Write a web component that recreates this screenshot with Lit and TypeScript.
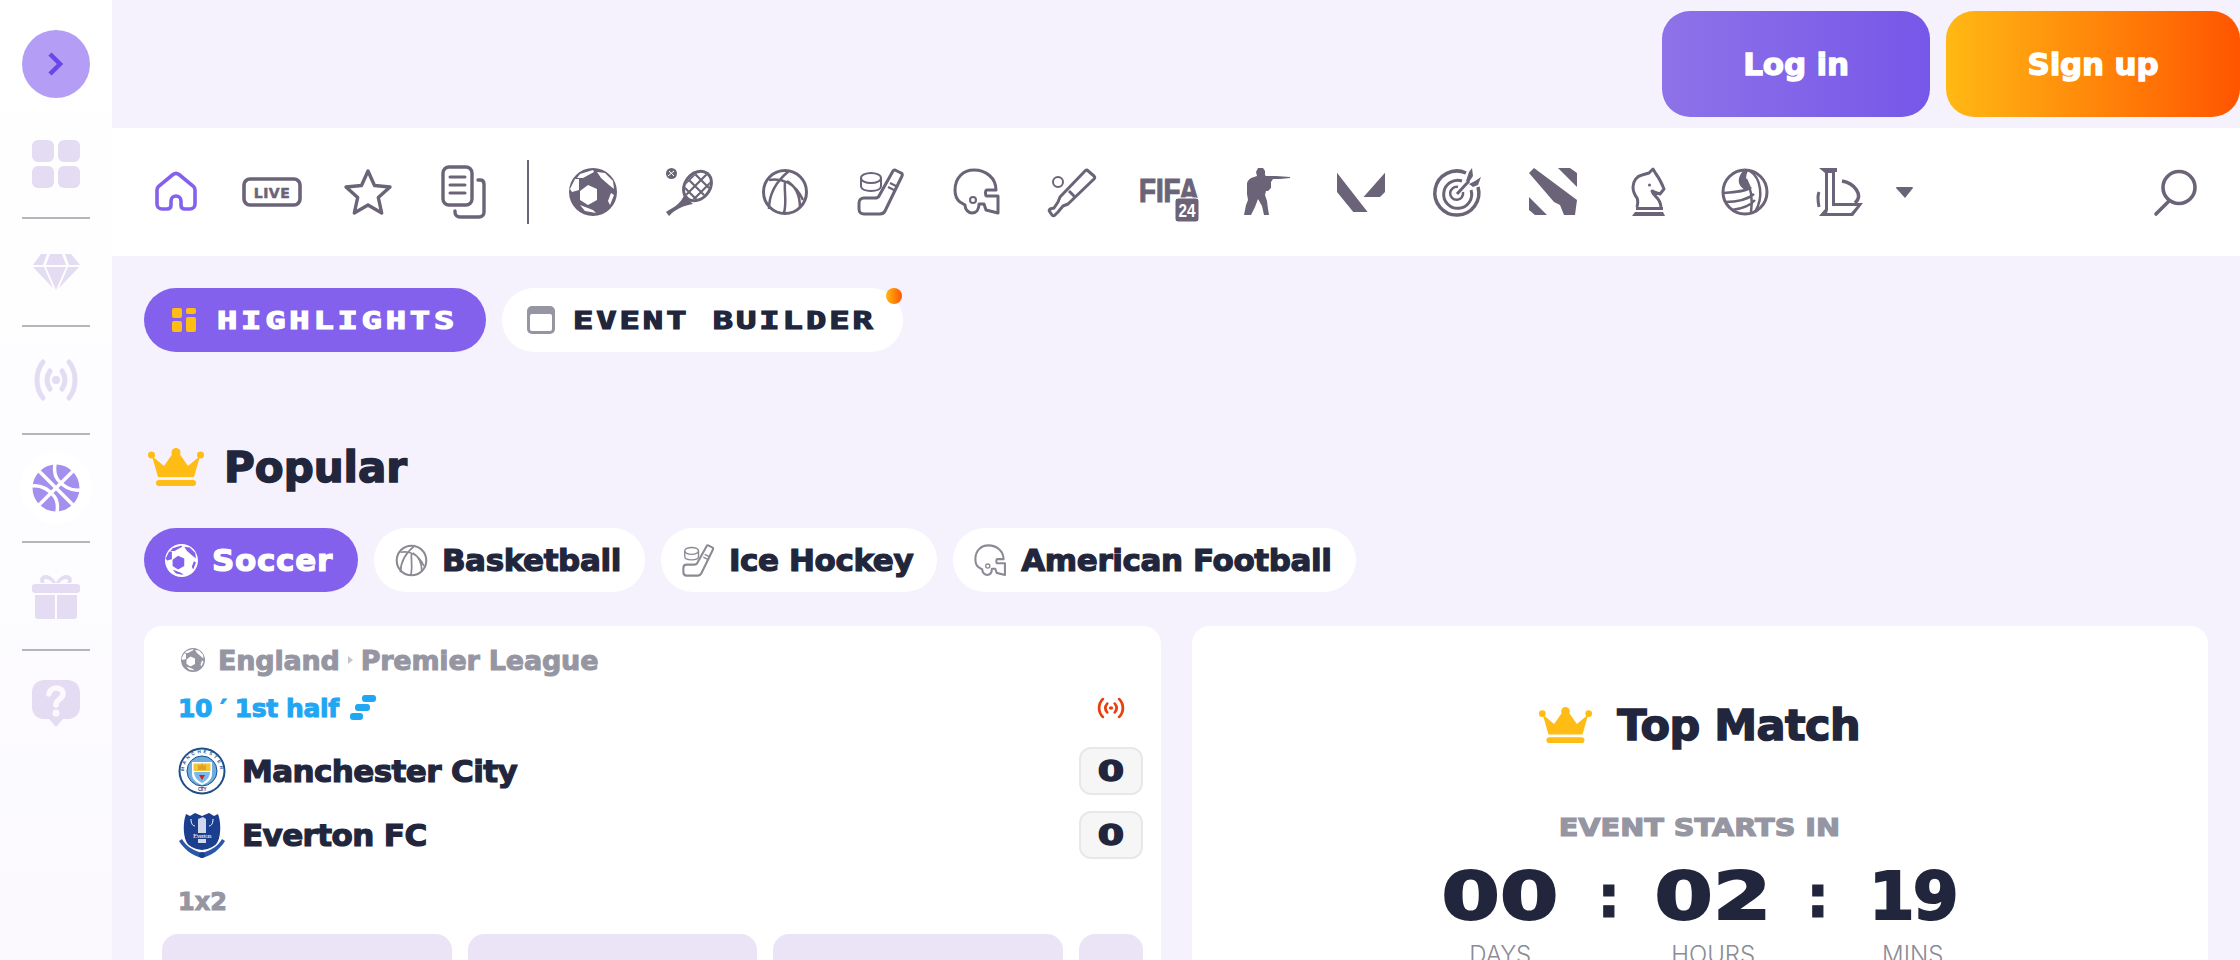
import { LitElement, html, css } from 'lit';
import { customElement } from 'lit/decorators.js';

// Icons: all on a 48 box unless noted, coloured through currentColor
const soccer = html`<svg viewBox="0 0 48 48" fill="currentColor"><path fill-rule="evenodd" d="M24 0a24 24 0 1 0 0 48 24 24 0 0 0 0-48zM11 23l8-6 9 4v11l-9 5-8-5zM11 6l13-4 1 2-11 6-6 0zM28 4l8 1 8 8 1 8-5-4-8-7zM6 11h4v11l-7 2-2-3zM39 33l3-8 3 2-4 10zM11 37l13 5 3 3-11-2z"/></svg>`;
const basketball = html`<svg viewBox="0 0 48 48" fill="none" stroke="currentColor" stroke-width="3"><circle cx="24" cy="24" r="21.5"/><path stroke-width="2.5" d="M8 12c12-2 26 2 34 20M28 3c-10 8-20 20-20 38M26 13c10 6 13 16 13 27M24 14c-1 10 2 20-1 31"/></svg>`;
const hockey = html`<svg viewBox="0 0 48 48" fill="none" stroke="currentColor" stroke-width="3" stroke-linejoin="round"><path d="M38 2l6 3a2 2 0 0 1 1 3L28 43c-1 2-2 3-5 3H7c-3 0-5-2-5-5v-6c0-3 2-5 5-5h11c2 0 3 0 4-2L36 3a2 2 0 0 1 2-1z"/><path stroke-width="2" d="M33 15l8 4M31 19l8 4"/><ellipse stroke-width="2" cx="14" cy="10" rx="10" ry="5"/><path stroke-width="2" d="M4 10v8c0 3 4 5 10 5s10-2 10-5v-8"/></svg>`;
const helmet = html`<svg viewBox="0 0 48 48" fill="none" stroke="currentColor" stroke-width="3" stroke-linejoin="round"><path d="M21 2c12 0 22 8 22 20h-9c-2 0-2 6 0 6h11v17l-12-3-2-6h-5c0 6-3 9-7 9-3 0-7-3-7-8l-5-3c-4-3-5-8-5-12C2 10 10 2 21 2z"/><circle cx="20" cy="32" r="3" stroke-width="2"/></svg>`;
const crown = html`<svg viewBox="0 0 56 38" fill="#ffbc14"><path d="M4 8l12 10 9-13h6l9 13 12-10-6 21H10z"/><circle cx="3.5" cy="7" r="3.5"/><circle cx="28" cy="4.5" r="4.5"/><circle cx="52.5" cy="7" r="3.5"/><rect x="8" y="32" width="40" height="6" rx="3"/></svg>`;
const broadcast = html`<svg viewBox="0 0 48 48" fill="none" stroke="currentColor" stroke-width="5" stroke-linecap="round"><path d="M11 6C3 16 3 32 11 42M37 6c8 10 8 26 0 36M18 15c-4 6-4 12 0 18M30 15c4 6 4 12 0 18"/><circle cx="24" cy="24" r="4" fill="currentColor" stroke="none"/></svg>`;

const navIcons = [
  html`<svg viewBox="0 0 48 48"><defs><clipPath id="head"><ellipse cx="32.5" cy="18" rx="11" ry="14.5" transform="rotate(38 32.5 18)"/></clipPath></defs><circle cx="6.5" cy="5.500" r="5.500" fill="currentColor"/><path d="M3 8l6-5M4 3l5 5" stroke="#fff" stroke-width="1"/><path fill="currentColor" d="M20 24c-1 6-6 13-16 18l-3 2 3 4 3-3c6-5 14-8 21-9l-3-3c-3-1-4-4-5-9z"/><ellipse fill="currentColor" cx="32.500" cy="18" rx="14" ry="17.500" transform="rotate(38 32.500 18)"/><g clip-path="url(#head)"><rect width="48" height="48" fill="#fff"/><path stroke="currentColor" stroke-width="2.200" fill="none" d="M10 10l30 30M16 4l30 30M22-2l30 30M28-8l24 24M12 24L38-2M18 30L46 2M24 36L52 8"/></g></svg>`,
  basketball,
  hockey,
  helmet,
  html`<svg viewBox="0 0 48 48" fill="none" stroke="currentColor" stroke-width="3" stroke-linejoin="round"><path d="M38 2l7 6c1 1 1 2 0 3L19 36l-5 2-5 6-3 3c-1 1-2 1-3 0l-2-3c-1-1-1-2 0-3l4-1 4-6 2-5L36 3c1-1 1-1 2-1z"/><path d="M20 23l6 6"/><circle cx="9" cy="14" r="5" stroke-width="2"/></svg>`,
  html`<svg class="fifa" viewBox="0 0 60 54"><text x="0" y="34" font-family="Liberation Sans" font-weight="700" font-size="33" textLength="60" lengthAdjust="spacingAndGlyphs" fill="currentColor" stroke="currentColor" stroke-width="1.200">FIFA</text><rect x="36" y="30" width="24" height="24" rx="3" fill="currentColor" stroke="#fff" stroke-width="1"/><text x="48" y="49" text-anchor="middle" font-family="Liberation Sans" font-weight="700" font-size="18" textLength="17" lengthAdjust="spacingAndGlyphs" fill="#fff">24</text></svg>`,
  html`<svg viewBox="0 0 48 48" fill="currentColor"><path d="M17 0h5l2 3v4l1 1h10l14 1v1l-10 1h-7l-2 3v6l-3 3h-2l-1 4 2 6 1 8 1 6h-5l-2-9-4-7-3 8-4 8H3l2-10 2-5-1-6V16c0-3 3-6 7-7l3-1-1-4z"/></svg>`,
  html`<svg viewBox="0 0 48 48" fill="currentColor"><path d="M0 4.700L30.600 44H16.300L0 24zM48 4.700V24l-5 5H26.500z"/></svg>`,
  html`<svg viewBox="0 0 48 48" fill="none" stroke="currentColor"><path stroke-width="3.500" d="M33 5a22 22 0 1 0 12 14"/><path stroke-width="3" d="M29 13a14 14 0 1 0 9 9"/><path stroke-width="2.500" d="M25 19a6.500 6.500 0 1 0 5 5"/><path stroke-width="3" d="M24 26l12-13"/><path fill="currentColor" stroke="none" d="M33 13l3-9 3-4 1 8-4 6zM36 16l6-3 6-4-3 8-5 2z"/></svg>`,
  html`<svg viewBox="0 0 48 48" fill="currentColor"><path d="M29 0h12l7 5v14zM0 5l5-5 43 32-2 15H35l-4-10-6-3zM0 29l18 18H6l-6-5z"/></svg>`,
  html`<svg viewBox="0 0 48 48" fill="none" stroke="currentColor" stroke-width="3"><path stroke-linejoin="round" d="M12 39c1-4 1-7 0-9-3-4-4-7-4-11 0-6 4-11 9-12l7-2 4-4 3 5c3 4 6 10 8 15l-4 5-6-2c-1-1-1-1-2-1 1 6 9 6 9 17"/><circle cx="24.500" cy="17" r="1.500" fill="currentColor" stroke="none"/><path d="M11 40.500h27"/><path fill="currentColor" stroke="none" d="M10 44h28l2 4H7z"/></svg>`,
  html`<svg viewBox="0 0 48 48" fill="none" stroke="currentColor" stroke-width="3"><circle cx="24" cy="24" r="22"/><path stroke-width="2.500" d="M3 25c10-1 22-1 27-6M4 34c10 0 22-2 29-8M11 42c8-1 17-3 23-10M29 3c11 7 14 26 5 41M25 11c5 9 7 20 5 33"/><path fill="currentColor" stroke="none" d="M22 3c-6 7-6 14 2 19l4-3c-3-5-4-11-1-16z"/></svg>`,
  html`<svg viewBox="0 0 48 48" fill="none" stroke="currentColor"><path fill="currentColor" stroke="none" d="M2 0h18v4h-2v31h28l-10 13H2l6-7V5z"/><path fill="#fff" stroke="none" d="M11 5h4v33h25l-6 7H10l1-3z"/><path stroke-width="3.500" d="M25 13c12 2 22 14 13 22"/><path stroke-width="3" d="M2 24c-2 5-1 10 0 15"/></svg>`,
];

const sideIcons = {
  grid: html`<svg viewBox="0 0 48 48" fill="currentColor"><rect width="22" height="22" rx="6"/><rect x="26" width="22" height="22" rx="6"/><rect y="26" width="22" height="22" rx="6"/><rect x="26" y="26" width="22" height="22" rx="6"/></svg>`,
  gem: html`<svg viewBox="0 0 48 48" fill="currentColor"><path d="M9 6h6l-4 11H1zM18 6h12l4 11H14zM33 6h6l9 11H37zM1 19h11l9 21zM14 19h20L24 42zM36 19h11L27 40z"/></svg>`,
  ball: html`<svg viewBox="0 0 48 48" fill="currentColor" stroke="#fff"><circle cx="24" cy="24" r="23.5" stroke="none"/><g fill="none" stroke-width="3.5"><path d="M7 7l34 34M41 7L7 41M0 22c9-1 17 4 22 10 4 5 4 10 3 16M48 26c-9 1-17-4-22-10-4-5-4-10-3-16"/></g></svg>`,
  gift: html`<svg viewBox="0 0 48 48" fill="currentColor"><path d="M3 23h20v24H6a3 3 0 0 1-3-3zM25 23h20v21a3 3 0 0 1-3 3H25z"/><rect y="12" width="48" height="9" rx="3"/><path d="M24 11c-2-4-6-8-10-8-7 0-7 8-4 8h3c-2-2-1-4 1-4 3 0 5 2 7 4zM24 11c2-4 6-8 10-8 7 0 7 8 4 8h-3c2-2 1-4-1-4-3 0-5 2-7 4z"/></svg>`,
  help: html`<svg viewBox="0 0 48 48"><path fill="currentColor" d="M13 0h22c8 0 13 5 13 13v14c0 7-5 12-12 12h-5l-7 8-7-8h-5C5 39 0 34 0 27V13C0 5 5 0 13 0z"/><path fill="none" stroke="#fbf9fe" stroke-width="5.5" stroke-linecap="round" d="M17 14c1-8 14-8 14 0 0 5-7 5-7 11"/><circle cx="24" cy="33" r="3.5" fill="#fbf9fe"/></svg>`,
};

const cityCrest = html`<svg viewBox="0 0 48 48"><defs><path id="ring" d="M6 24a18 18 0 1 1 36 0"/></defs><circle cx="24" cy="24" r="23.5" fill="#1c4f86"/><circle cx="24" cy="24" r="21.5" fill="#fff"/><circle cx="24" cy="24" r="15" fill="#6caee0" stroke="#1c4f86"/><text class="crest-text" font-family="Liberation Sans" font-size="4.6" font-weight="700" fill="#1c4f86"><textPath href="#ring" textLength="54">MANCHESTER</textPath></text><text class="crest-text" x="24" y="44" text-anchor="middle" font-family="Liberation Sans" font-size="4.6" font-weight="700" fill="#1c4f86">CITY</text><path d="M14 15h20v12c0 6-5 9-10 11-5-2-10-5-10-11z" fill="#fff"/><path d="M15.5 16.5h17V24h-17z" fill="#f3c53c"/><path d="M20 23v-6l2 2 2-3 2 3 2-2v6z" fill="#e0a520"/><path d="M16 25h16c0 5-4 9-8 11-4-2-8-6-8-11z" fill="#7bb9e6"/><path d="M21 28h6l-3 5z" fill="#c8242f"/></svg>`;
const evertonCrest = html`<svg viewBox="0 0 48 48"><path d="M8 3l4 2 5-3 7 3 7-3 5 3 4-2c3 8 3 20 0 27-2 5-8 8-16 9-8-1-14-4-16-9C5 23 5 11 8 3z" fill="#1b3e8f"/><path d="M20 8l5-2 3 2v24h-8z" fill="#cfd8ec"/><path d="M13 8c0 5 2 7 4 7M35 8c0 5-2 7-4 7" stroke="#fff" fill="none"/><rect x="7" y="22" width="34" height="6" fill="#1b3e8f"/><text class="crest-text" x="24" y="27" text-anchor="middle" font-family="Liberation Serif" font-weight="400" font-size="7" fill="#fff">Everton</text><path d="M1 30c5 8 12 14 23 17 11-3 18-9 23-17l-3-2c-4 7-10 11-20 14-10-3-16-7-20-14z" fill="#2c56a8"/><circle cx="24" cy="44" r="3" fill="#1b3e8f"/></svg>`;

@customElement('app-root')
export class AppRoot extends LitElement {
  static styles = css`
    :host {
      display: flex;
      width: 2240px;
      height: 960px;
      overflow: hidden;
      background: #f5f2fd;
      font-family: "DejaVu Sans", "Liberation Sans", sans-serif;
      font-weight: 700;
      -webkit-text-stroke: 1px currentColor;
      color: #22263c;
    }
    .crest-text { -webkit-text-stroke: 0; }

    .sidebar {
      width: 112px;
      flex: none;
      padding-top: 30px;
      background: linear-gradient(#ffffff, #fbf9fe);
      color: #e3dcf2;
      display: flex;
      flex-direction: column;
      align-items: center;
      gap: 29px;
    }
    .toggle {
      width: 68px;
      height: 68px;
      margin-bottom: 13px;
      border-radius: 50%;
      background: #b39df5;
      color: #6a45e8;
      display: flex;
      align-items: center;
      justify-content: center;
    }
    .toggle svg { width: 22px; height: 28px; }
    .side-icon { width: 48px; height: 48px; position: relative; }
    .side-icon.active { color: #a48fee; }
    .side-icon.active::before {
      content: '';
      position: absolute;
      inset: -12px;
      border-radius: 50%;
      background: #fff;
    }
    .side-icon svg { display: block; width: 48px; height: 48px; position: relative; }
    .side-line { width: 68px; height: 2px; background: #b7b5bb; }

    .main { flex: 1; min-width: 0; display: flex; flex-direction: column; }

    .topbar {
      height: 128px;
      flex: none;
      display: flex;
      justify-content: flex-end;
      align-items: center;
      gap: 16px;
    }
    .btn {
      height: 106px;
      border-radius: 28px;
      display: flex;
      align-items: center;
      justify-content: center;
      color: #fff;
      font-size: 31px;
      letter-spacing: -0.2px;
      -webkit-text-stroke-width: 1.3px;
    }
    .btn.login { width: 268px; background: linear-gradient(90deg, #8e72e8, #7657e8); }
    .btn.signup { width: 294px; background: linear-gradient(90deg, #ffb914, #ff5500); }

    .nav {
      height: 128px;
      flex: none;
      background: #fff;
      display: flex;
      align-items: center;
      gap: 48px;
      padding-left: 40px;
      padding-right: 41px;
      color: #6b6478;
      -webkit-text-stroke: 0;
    }
    .nav-item { width: 48px; height: 48px; flex: none; display: flex; justify-content: center; align-items: center; }
    .nav-item svg { width: 48px; height: 48px; flex: none; overflow: visible; }
    .nav-item.home { color: #8461ec; }
    .nav-item .live { width: 60px; height: 30px; }
    .nav-item .docs { height: 54px; }
    .nav-item .fifa { width: 60px; height: 54px; margin-top: 6px; }
    .nav-sep { width: 2px; height: 64px; background: #6b6478; flex: none; margin: 0 -8px 0 -9px; }
    .caret { width: 17px; height: 11px; margin-left: -17px; flex: none; }
    .search { margin-left: auto; }

    .content { padding: 32px 32px 0; }

    .tabs { display: flex; gap: 16px; }
    .tab {
      height: 64px;
      border-radius: 32px;
      display: flex;
      align-items: center;
      box-sizing: border-box;
      position: relative;
      font-family: "DejaVu Sans Mono", monospace;
      font-size: 25px;
      -webkit-text-stroke-width: 1.2px;
    }
    .tab span.txt { display: inline-block; transform: scaleX(1.35); transform-origin: left center; white-space: nowrap; }
    .tab.on { width: 342px; padding-left: 28px; gap: 21px; background: #8461ec; color: #fff; letter-spacing: 2.8px; }
    .tab.off { width: 401px; padding-left: 25px; gap: 18px; background: #fff; letter-spacing: 2.2px; }
    .tab .dot {
      position: absolute;
      top: 0;
      right: 1px;
      width: 16px;
      height: 16px;
      border-radius: 50%;
      background: linear-gradient(90deg, #ffb914, #ff5500);
    }
    .tab svg { flex: none; }

    .heading {
      margin-top: 87px;
      height: 56px;
      padding-left: 4px;
      display: flex;
      align-items: center;
      gap: 20px;
      font-size: 42px;
      -webkit-text-stroke-width: 1.5px;
    }
    .heading svg { width: 56px; height: 38px; }

    .chips { margin-top: 33px; display: flex; gap: 16px; }
    .chip {
      height: 64px;
      border-radius: 32px;
      padding: 0 24px 0 21px;
      display: flex;
      align-items: center;
      gap: 14px;
      background: #fff;
      font-size: 31px;
      letter-spacing: -0.4px;
      -webkit-text-stroke-width: 1.2px;
    }
    .chip svg { width: 33px; height: 33px; color: #8b8a94; }
    .chip.on { padding-right: 25px; letter-spacing: 0.7px; background: #8461ec; color: #fff; }
    .chip.on svg { color: #fff; }

    .cards { margin-top: 34px; display: grid; grid-template-columns: 1fr 1fr; gap: 31px; }
    .card { background: #fff; border-radius: 18px; height: 500px; box-sizing: border-box; }
    .card.match { padding: 22px 18px 0; }

    .league {
      height: 24px;
      padding-left: 19px;
      display: flex;
      align-items: center;
      color: #9696a3;
      font-size: 27px;
      letter-spacing: -0.2px;
    }
    .league svg { width: 24px; height: 24px; margin-right: 13px; }
    .league i {
      width: 0;
      height: 0;
      margin: 0 8px;
      border-left: 5px solid #c4c4cc;
      border-top: 4px solid transparent;
      border-bottom: 4px solid transparent;
    }
    .status {
      margin-top: 22px;
      height: 28px;
      padding: 0 17px 0 16px;
      display: flex;
      align-items: center;
      color: #20a6f2;
      font-size: 25px;
      letter-spacing: -0.4px;
    }
    .status .bars { width: 26px; height: 26px; margin-left: 11px; }
    .status .on-air { width: 30px; height: 24px; margin-left: auto; color: #e8400f; }

    .team {
      margin-top: 16px;
      padding-left: 16px;
      display: flex;
      align-items: center;
      gap: 16px;
      font-size: 31px;
      letter-spacing: -0.6px;
      -webkit-text-stroke-width: 1.2px;
    }
    .status + .team { margin-top: 25px; }
    .team svg { width: 48px; height: 48px; flex: none; }
    .score {
      margin-left: auto;
      width: 64px;
      height: 48px;
      box-sizing: border-box;
      border-radius: 12px;
      border: 2px solid #e8e8ea;
      background: #f6f6f7;
      display: flex;
      align-items: center;
      justify-content: center;
      font-size: 28px;
      -webkit-text-stroke-width: 1.4px;
    }
    .score span { display: inline-block; transform: scaleX(1.35); }

    .market {
      margin-top: 28px;
      padding-left: 16px;
      height: 30px;
      line-height: 30px;
      color: #9696a3;
      font-size: 24px;
    }
    .odds { margin-top: 17px; display: grid; grid-template-columns: 1fr 1fr 1fr 64px; gap: 16px; }
    .odds div { height: 120px; border-radius: 16px; background: #ebe4f7; }

    .card.top { padding-top: 71px; display: flex; flex-direction: column; align-items: center; }
    .top-title {
      height: 56px;
      display: flex;
      align-items: center;
      gap: 25px;
      font-size: 43px;
      letter-spacing: -0.5px;
      -webkit-text-stroke-width: 1.5px;
    }
    .top-title svg { width: 53px; height: 38px; }
    .starts {
      margin-top: 59px;
      height: 32px;
      line-height: 32px;
      color: #9696a3;
      font-size: 25px;
      transform: scaleX(1.15);
      -webkit-text-stroke-width: 1.2px;
    }
    .timer {
      margin-top: 18px;
      display: grid;
      grid-template-columns: 117px 14px 109px 14px 90px;
      column-gap: 43px;
      justify-items: center;
      align-items: center;
    }
    .digits {
      font-size: 66px;
      line-height: 70px;
      white-space: nowrap;
      display: inline-block;
      transform: scaleX(1.27);
      -webkit-text-stroke-width: 2px;
    }
    .digits.narrow { transform: scaleX(1); letter-spacing: -2px; }
    .colon { font-size: 58px; line-height: 70px; -webkit-text-stroke-width: 1px; }
    .unit {
      margin-top: 8px;
      grid-row: 2;
      color: #8b8b96;
      font-family: Inter, sans-serif;
      font-weight: 300;
      -webkit-text-stroke: 0;
      font-size: 24px;
      white-space: nowrap;
    }
    .unit.a { grid-column: 1; }
    .unit.b { grid-column: 3; }
    .unit.c { grid-column: 5; }
  `;

  render() {
    const chips = [
      { label: 'Soccer', icon: soccer, on: true },
      { label: 'Basketball', icon: basketball },
      { label: 'Ice Hockey', icon: hockey },
      { label: 'American Football', icon: helmet },
    ];
    return html`
      <aside class="sidebar">
        <div class="toggle">
          <svg viewBox="0 0 22 28" fill="none" stroke="currentColor" stroke-width="4.5"><path d="M5 4l10 10-10 10"/></svg>
        </div>
        <div class="side-icon">${sideIcons.grid}</div>
        <div class="side-line"></div>
        <div class="side-icon">${sideIcons.gem}</div>
        <div class="side-line"></div>
        <div class="side-icon">${broadcast}</div>
        <div class="side-line"></div>
        <div class="side-icon active">${sideIcons.ball}</div>
        <div class="side-line"></div>
        <div class="side-icon">${sideIcons.gift}</div>
        <div class="side-line"></div>
        <div class="side-icon">${sideIcons.help}</div>
      </aside>
      <div class="main">
        <header class="topbar">
          <div class="btn login">Log in</div>
          <div class="btn signup">Sign up</div>
        </header>
        <nav class="nav">
          <div class="nav-item home">
            <svg viewBox="0 0 48 48" fill="none" stroke="currentColor" stroke-width="3.6" stroke-linejoin="round"><path d="M5 22c0-1.500.6-2.700 1.600-3.600L21 6.500c1.800-1.400 4.200-1.400 6 0l14.400 11.900c1 .9 1.600 2.100 1.600 3.600v14c0 3.300-2.700 5-5 5h-5c-2.500 0-4-1.500-4-4v-4c0-3-2.500-5-5-5s-5 2-5 5v4c0 2.500-1.500 4-4 4h-5c-2.300 0-5-1.700-5-5z"/></svg>
          </div>
          <div class="nav-item">
            <svg class="live" viewBox="0 0 60 30" fill="none"><rect x="2" y="2" width="56" height="26" rx="6" stroke="currentColor" stroke-width="3.6"/><text x="30" y="20.500" text-anchor="middle" font-family="DejaVu Sans" font-weight="700" font-size="14" stroke="currentColor" stroke-width=".5" letter-spacing=".5" fill="currentColor">LIVE</text></svg>
          </div>
          <div class="nav-item">
            <svg viewBox="0 0 48 48" fill="none" stroke="currentColor" stroke-width="3.4" stroke-linejoin="round"><path d="M24 3l6.500 14.500 15.500 1.500-11.700 10.500 3.400 15.500L24 37l-13.700 8 3.400-15.500L2 19l15.500-1.500z"/></svg>
          </div>
          <div class="nav-item">
            <svg class="docs" viewBox="0 0 48 54" fill="none" stroke="currentColor" stroke-width="3.4" stroke-linecap="round"><rect x="3" y="2" width="29" height="38" rx="6"/><path d="M10 12h15M10 20h15M10 28h15" stroke-width="3"/><path d="M38 15h2c3 0 4 2 4 4v28c0 3-2 5-5 5H20c-3 0-5-2-5-5v-1"/></svg>
          </div>
          <div class="nav-sep"></div>
          <div class="nav-item">${soccer}</div>
          ${navIcons.map((icon) => html`<div class="nav-item">${icon}</div>`)}
          <svg class="caret" viewBox="0 0 17 11" fill="#6b6478"><path d="M1 0h15a1 1 0 0 1 1 1l-8 10L0 1a1 1 0 0 1 1-1z"/></svg>
          <div class="nav-item search">
            <svg viewBox="0 0 48 48" fill="none" stroke="currentColor" stroke-width="3.6" stroke-linecap="round"><circle cx="28" cy="19.500" r="16"/><path d="M18 33L5 46"/></svg>
          </div>
        </nav>
        <section class="content">
          <div class="tabs">
            <div class="tab on">
              <svg width="24" height="24" viewBox="0 0 24 24" fill="#ffbc14"><rect width="10" height="10" rx="2"/><rect x="14" width="10" height="6" rx="2"/><rect y="13" width="10" height="11" rx="2"/><rect x="14" y="9" width="10" height="15" rx="2"/></svg>
              <span class="txt">HIGHLIGHTS</span>
            </div>
            <div class="tab off">
              <svg width="28" height="28" viewBox="0 0 28 28"><rect width="28" height="28" rx="5" fill="#9696a3"/><rect x="3" y="8" width="22" height="17" rx="2" fill="#fff"/></svg>
              <span class="txt">EVENT BUILDER</span>
              <span class="dot"></span>
            </div>
          </div>
          <div class="heading">${crown}<span>Popular</span></div>
          <div class="chips">
            ${chips.map(
              (c) => html`<div class="chip ${c.on ? 'on' : ''}">${c.icon}<span>${c.label}</span></div>`
            )}
          </div>
          <div class="cards">
            <div class="card match">
              <div class="league">${soccer}England<i></i>Premier League</div>
              <div class="status">
                <span>10 ′ 1st half</span>
                <svg class="bars" viewBox="0 0 26 26" fill="currentColor"><rect x="12" width="14" height="7" rx="3"/><rect x="5" y="9" width="15" height="7" rx="3"/><rect y="18" width="13" height="7" rx="3"/></svg>
                <svg class="on-air" viewBox="0 0 48 48" preserveAspectRatio="none" fill="none" stroke="currentColor" stroke-width="4.500" stroke-linecap="round"><path d="M11 6C3 16 3 32 11 42M37 6c8 10 8 26 0 36M18 15c-4 6-4 12 0 18M30 15c4 6 4 12 0 18"/><circle cx="24" cy="24" r="3.500" fill="currentColor" stroke="none"/></svg>
              </div>
              <div class="team">${cityCrest}<span>Manchester City</span><div class="score"><span>0</span></div></div>
              <div class="team">${evertonCrest}<span>Everton FC</span><div class="score"><span>0</span></div></div>
              <div class="market">1x2</div>
              <div class="odds"><div></div><div></div><div></div><div></div></div>
            </div>
            <div class="card top">
              <div class="top-title">${crown}<span>Top Match</span></div>
              <div class="starts">EVENT STARTS IN</div>
              <div class="timer">
                <span class="digits">00</span><span class="colon">:</span>
                <span class="digits">02</span><span class="colon">:</span>
                <span class="digits narrow">19</span>
                <span class="unit a">DAYS</span>
                <span class="unit b">HOURS</span>
                <span class="unit c">MINS</span>
              </div>
            </div>
          </div>
        </section>
      </div>
    `;
  }
}
